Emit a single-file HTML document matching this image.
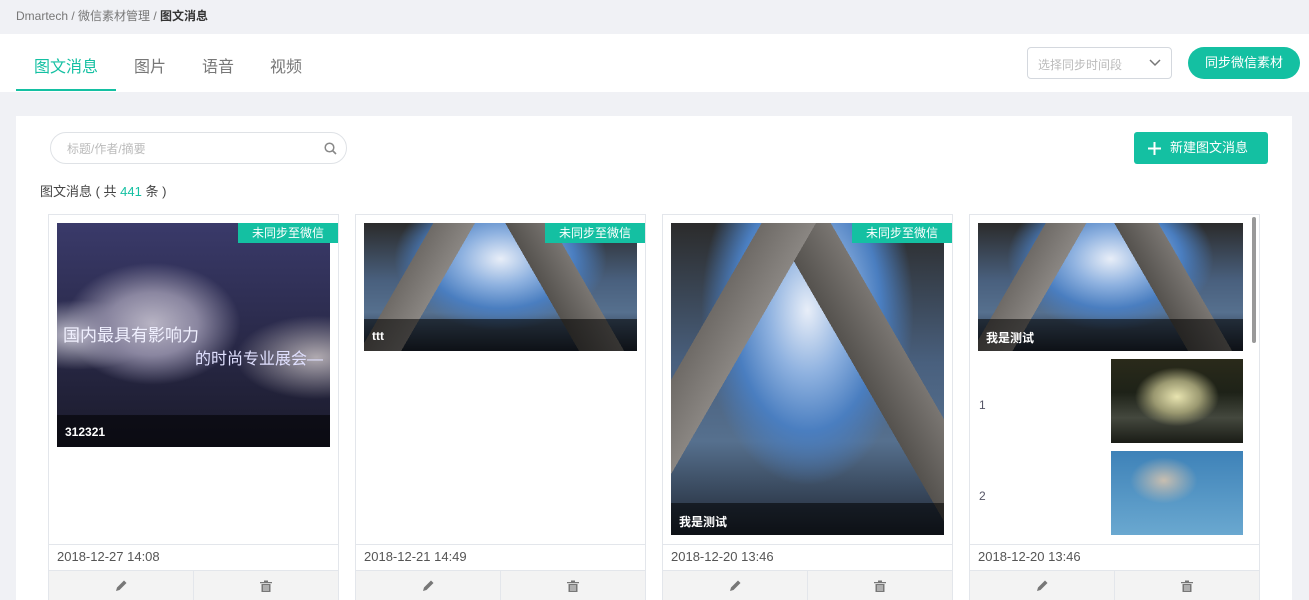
<!DOCTYPE html>
<html style="width:1309px;height:600px;overflow:hidden"><head><meta charset="utf-8"><style>
*{margin:0;padding:0;box-sizing:border-box}
body{width:1309px;height:600px;overflow:hidden;background:#f0f1f5;font-family:"Liberation Sans","Noto Sans CJK SC",sans-serif;position:relative;color:#333}
.a{position:absolute}
.card{position:absolute;top:214px;width:291px;height:400px;border:1px solid #e3e6eb;background:#fff}
.date{position:absolute;left:0;right:0;top:329px;height:26px;border-top:1px solid #e3e6eb;font-size:13px;color:#555;padding:4px 8px}
.acts{position:absolute;left:0;right:0;top:355px;height:40px;background:#f3f3f3;border-top:1px solid #e3e6eb}
.acts div{position:absolute;top:0;width:50%;height:40px;text-align:center;padding-top:8px}
.badge{position:absolute;top:8px;right:0;width:100px;height:20px;background:#14c0a2;color:#fff;font-size:12px;text-align:center;line-height:20px}
.cap{position:absolute;left:0;right:0;bottom:0;height:32px;background:rgba(0,0,0,.55);color:#fff;font-weight:bold;font-size:12px;padding:10px 8px}
.img{position:absolute;left:8px;top:8px;width:273px;overflow:hidden}
.sky{background:linear-gradient(120deg,transparent 0,transparent 20%,#6e6a66 20%,#8a8682 32%,transparent 32%),linear-gradient(240deg,transparent 25%,#7a7672 25%,#55524e 38%,transparent 38%),radial-gradient(ellipse at 50% 28%,#e8eef8 0,#8fb2e0 20%,#4a7ec0 38%,transparent 55%),linear-gradient(180deg,#2b2b2b 0,#49607e 45%,#56708e 70%,#1f2632 100%)}
</style></head><body>
<div class="a" style="left:16px;top:7px;font-size:12px;color:#777">Dmartech / 微信素材管理 / <b style="color:#333">图文消息</b></div>
<div class="a" style="left:0;top:34px;width:1309px;height:58px;background:#fff"></div>
<div class="a" style="left:34px;top:53px;font-size:16px;color:#14c0a2">图文消息</div>
<div class="a" style="left:16px;top:89px;width:100px;height:2px;background:#14c0a2"></div>
<div class="a" style="left:134px;top:53px;font-size:16px;color:#777">图片</div>
<div class="a" style="left:202px;top:53px;font-size:16px;color:#777">语音</div>
<div class="a" style="left:270px;top:53px;font-size:16px;color:#777">视频</div>
<div class="a" style="left:1027px;top:47px;width:145px;height:32px;border:1px solid #d4d8de;border-radius:4px;font-size:12px;color:#bbb;padding:8px 10px">选择同步时间段<svg style="position:absolute;right:10px;top:11px" width="12" height="8" viewBox="0 0 12 8"><path d="M1 1l5 5 5-5" stroke="#777" fill="none" stroke-width="1.5"/></svg></div>
<div class="a" style="left:1188px;top:47px;width:112px;height:32px;border-radius:16px;background:#14c0a2;color:#fff;font-size:13px;text-align:center;line-height:32px">同步微信素材</div>
<div class="a" style="left:16px;top:116px;width:1276px;height:500px;background:#fff"></div>
<div class="a" style="left:50px;top:132px;width:297px;height:32px;border:1px solid #dfe2e6;border-radius:16px;font-size:12px;color:#bbb;padding:7px 16px">标题/作者/摘要<svg style="position:absolute;right:9px;top:9px" width="13" height="13" viewBox="0 0 13 13"><circle cx="5.5" cy="5.5" r="4.3" stroke="#888" stroke-width="1.5" fill="none"/><path d="M8.5 8.5l3.5 3.5" stroke="#888" stroke-width="1.6"/></svg></div>
<div class="a" style="left:1134px;top:132px;width:134px;height:32px;border-radius:3px;background:#14c0a2;color:#fff;font-size:13px;line-height:32px;padding-left:36px">新建图文消息<svg style="position:absolute;left:14px;top:10px" width="13" height="13"><path d="M6.5 0v13M0 6.5h13" stroke="#fff" stroke-width="2"/></svg></div>
<div class="a" style="left:40px;top:181px;font-size:13px;color:#444">图文消息 ( 共 <span style="color:#14c0a2">441</span> 条 )</div>

<svg width="0" height="0" style="position:absolute"><defs>
<symbol id="pen" viewBox="0 0 14 14"><path d="M2 12l1-3.5 7-7 2.5 2.5-7 7z" fill="#777"/></symbol>
<symbol id="bin" viewBox="0 0 14 14"><path d="M1 3h12v1.3H1zM5 1.5h4V3H5zM2.5 5h9v8h-9z" fill="#777"/><path d="M5 6v6M7 6v6M9 6v6" stroke="#f3f3f3" stroke-width="0.9"/></symbol>
</defs></svg>

<div class="card" style="left:48px">
<div class="img" style="height:224px;background:radial-gradient(ellipse at 35% 45%,#b8b4c4 0,#8a86a0 18%,transparent 35%),radial-gradient(ellipse at 8% 50%,#c9c7d4 0,transparent 22%),radial-gradient(ellipse at 95% 60%,#b0aab0 0,transparent 22%),linear-gradient(#3a3a6a,#2a2a4a 50%,#1a1a2a)">
<div class="a" style="left:6px;top:98px;color:#f0f0ff;font-size:17px">国内最具有影响力</div>
<div class="a" style="left:138px;top:122px;color:#e0e0ff;font-size:16px">的时尚专业展会—</div>
<div class="cap">312321</div></div>
<div class="badge">未同步至微信</div>
<div class="date">2018-12-27 14:08</div>
<div class="acts"><div style="left:0;border-right:1px solid #e3e6eb"><svg width="14" height="14"><use href="#pen"/></svg></div><div style="left:50%"><svg width="14" height="14"><use href="#bin"/></svg></div></div>
</div>

<div class="card" style="left:355px">
<div class="img sky" style="height:128px"><div class="cap">ttt</div></div>
<div class="badge">未同步至微信</div>
<div class="date">2018-12-21 14:49</div>
<div class="acts"><div style="left:0;border-right:1px solid #e3e6eb"><svg width="14" height="14"><use href="#pen"/></svg></div><div style="left:50%"><svg width="14" height="14"><use href="#bin"/></svg></div></div>
</div>

<div class="card" style="left:662px">
<div class="img sky" style="height:312px"><div class="cap">我是测试</div></div>
<div class="badge">未同步至微信</div>
<div class="date">2018-12-20 13:46</div>
<div class="acts"><div style="left:0;border-right:1px solid #e3e6eb"><svg width="14" height="14"><use href="#pen"/></svg></div><div style="left:50%"><svg width="14" height="14"><use href="#bin"/></svg></div></div>
</div>

<div class="card" style="left:969px">
<div class="img sky" style="height:128px;width:265px"><div class="cap">我是测试</div></div>
<div class="a" style="left:282px;top:2px;width:4px;height:126px;background:#999;border-radius:2px"></div>
<div class="a" style="left:9px;top:183px;font-size:12px;color:#556">1</div>
<div class="a" style="left:141px;top:144px;width:132px;height:84px;background:radial-gradient(ellipse at 50% 45%,#e8e4b0 0,#9a9870 25%,transparent 45%),linear-gradient(#2a2a1a,#1e2218 40%,#44483e 70%,#1a1c16)"></div>
<div class="a" style="left:9px;top:274px;font-size:12px;color:#556">2</div>
<div class="a" style="left:141px;top:236px;width:132px;height:84px;background:radial-gradient(ellipse at 40% 35%,#c8beb0 0,transparent 30%),linear-gradient(#3e82b8,#6aa8d0)"></div>
<div class="date">2018-12-20 13:46</div>
<div class="acts"><div style="left:0;border-right:1px solid #e3e6eb"><svg width="14" height="14"><use href="#pen"/></svg></div><div style="left:50%"><svg width="14" height="14"><use href="#bin"/></svg></div></div>
</div>
</body></html>
